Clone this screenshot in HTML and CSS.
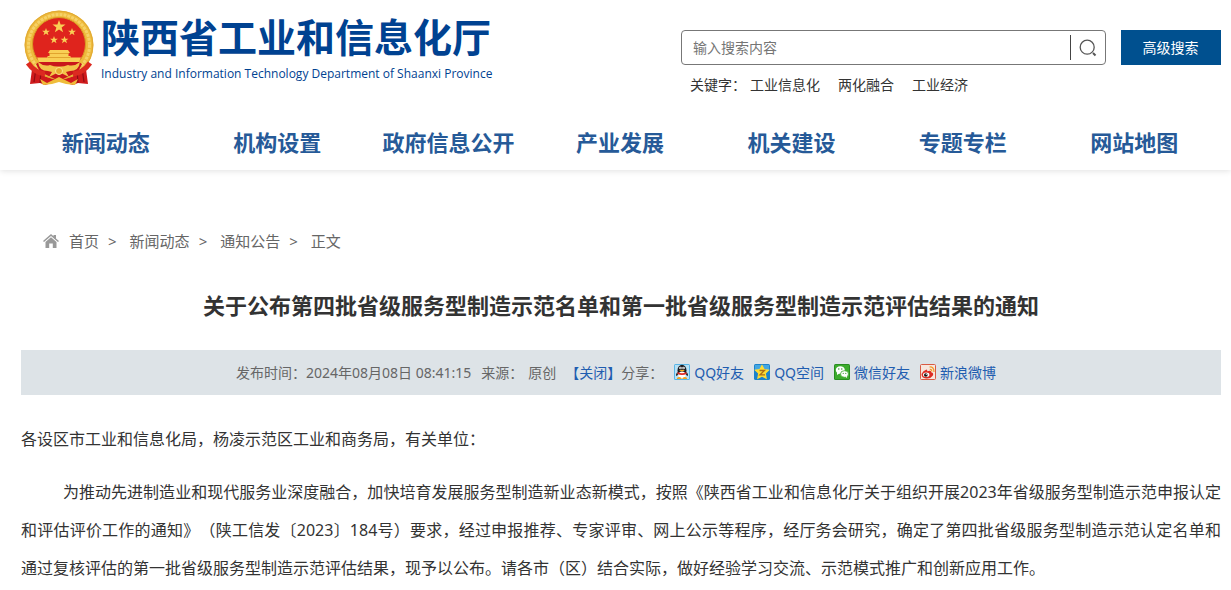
FILE: index.html
```html
<!DOCTYPE html>
<html lang="zh-CN">
<head>
<meta charset="utf-8">
<meta name="viewport" content="width=device-width, initial-scale=1">
<title>陕西省工业和信息化厅</title>
<link rel="stylesheet" href="styles.css">
</head>
<body>
<header class="header">
  <div class="top">
    <a class="logo" href="#">
      <svg class="emblem" viewBox="0 0 70 76" aria-hidden="true">
        <path d="M9 52L6 74l10-1 5 2 14-4 14 4 5-2 10 1-3-22z" fill="#cf1a1c"/>
        <path d="M12 58l-2 14M17 60l-1 13M58 58l2 14M53 60l1 13" stroke="#8f0d12" stroke-width="1.200"/>
        <circle cx="35" cy="35" r="34.500" fill="#eebb3c"/>
        <circle cx="35" cy="35" r="30.500" fill="none" stroke="#f6d268" stroke-width="3" stroke-dasharray="3 1"/>
        <circle cx="35" cy="35" r="33.800" fill="none" stroke="#e0a935" stroke-width="1"/>
        <circle cx="35" cy="34" r="26.500" fill="#df241d" stroke="#d99a25" stroke-width="1"/>
        <g fill="#f9cf55">
          <path d="M35 10l1.600 4.600h4.900l-3.900 3 1.500 4.700-4.100-2.900-4.100 2.900 1.500-4.700-3.900-3h4.900z"/>
          <path id="s" d="M22 18l1 2.700h2.900l-2.300 1.700.9 2.800-2.500-1.700-2.500 1.700.9-2.800-2.300-1.700H21z"/>
          <use href="#s" x="26"/><use href="#s" x="8" y="8"/><use href="#s" x="18.500" y="8"/>
          <path d="M26 40h18l2 3H24zM25.500 43h19v3h2v3h-23v-3h2z"/>
          <path d="M13 47.500h44l-2 4.500H15z"/>
        </g>
        <path d="M25 43.500h20M24 47.500h22" stroke="#d7901e" stroke-width=".7"/>
        <path d="M12 54l3-2h40l3 2-4 8-15 7h-8l-15-7z" fill="#c9171b"/>
        <path d="M14 52q6 5 12 3 5 2 9 1.500 4 .5 9-1.500 6 2 12-3-1 9-10 9l-4 1 3 5-10-5-10 5 3-5-4-1q-9 0-10-9z" fill="#f3c44a"/>
        <path d="M16 69l7 4 12-6 12 6 7-4-3 6-9-1-7-2-7 2-9 1z" fill="#efbd3b"/>
        <path d="M4 53q7 10 17 11M66 53q-7 10-17 11" fill="none" stroke="#dc2a20" stroke-width="5"/>
        <circle cx="35" cy="61" r="3.500" fill="#e8a92e" stroke="#fbe48a"/>
      </svg>
      <span class="logo-text">
        <span class="logo-cn">陕西省工业和信息化厅</span>
        <span class="logo-en">Industry and Information Technology Department of Shaanxi Province</span>
      </span>
    </a>
    <div class="search">
      <form class="search-row">
        <div class="search-box">
          <input class="search-input" type="text" placeholder="输入搜索内容" aria-label="输入搜索内容">
          <button class="search-btn" type="button" aria-label="搜索">
            <svg viewBox="0 0 18 18" width="18" height="18" fill="none" stroke="#555" stroke-width="1.300"><circle cx="8.200" cy="8.200" r="7"/><path d="M14 14l2.500 2.500" stroke-width="2"/></svg>
          </button>
        </div>
        <button class="advanced" type="button">高级搜索</button>
      </form>
      <div class="keywords">
        <span>关键字：</span><a href="#">工业信息化</a><a href="#">两化融合</a><a href="#">工业经济</a>
      </div>
    </div>
  </div>
  <nav class="nav">
    <a href="#">新闻动态</a><a href="#">机构设置</a><a href="#">政府信息公开</a><a href="#">产业发展</a><a href="#">机关建设</a><a href="#">专题专栏</a><a href="#">网站地图</a>
  </nav>
</header>
<main class="main">
  <nav class="crumbs" aria-label="当前位置">
    <svg class="home" viewBox="0 0 16 14" width="16" height="14" fill="#999" aria-hidden="true"><path d="M8 0l2.500 2.200V1H13v3.500L16 7l-1 1-7-6-7 6-1-1z"/><path d="M8 3.300l5.500 4.700v6H9.800V9.500H6.200V14H2.500V8z"/></svg>
    <a href="#">首页</a><span>&gt;</span><a href="#">新闻动态</a><span>&gt;</span><a href="#">通知公告</a><span>&gt;</span><a href="#">正文</a>
  </nav>
  <h1 class="title">关于公布第四批省级服务型制造示范名单和第一批省级服务型制造示范评估结果的通知</h1>
  <div class="meta">
    <span class="date">发布时间：2024年08月08日 08:41:15</span>
    <span class="source">来源：<span class="origin">原创</span></span>
    <a href="#">【关闭】</a>
    <span class="share-label">分享：</span>
    <span class="shares">
      <a class="share" href="#">
        <svg viewBox="0 0 16 16" width="16" height="16" aria-hidden="true"><rect width="16" height="16" rx="1.500" fill="#58b5e6"/><rect x="1" y="1" width="14" height="14" fill="#b8e1f5"/><path d="M3.500 8Q1.500 10 2 12l2-1zM12.500 8q2 2 1.500 4l-2-1z" fill="#222"/><ellipse cx="8" cy="6.500" rx="4.500" ry="5.800" fill="#1b1b1f"/><ellipse cx="8" cy="11" rx="3.600" ry="3.500" fill="#fff"/><path d="M3.500 8q4.500 2.500 9 0v2q-4.500 2-9 0z" fill="#e42a20"/><circle cx="6.500" cy="4" r="1.300" fill="#fff"/><circle cx="9.500" cy="4" r="1.300" fill="#fff"/><circle cx="6.800" cy="4.100" r=".5"/><circle cx="9.200" cy="4.100" r=".5"/><path d="M5 6.300q3-1.200 6 0-3 2.200-6 0z" fill="#f9b622"/><path d="M3 14q2-2 4.500 0v1H3zM8.500 14q2.500-2 4.500 0v1H8.500z" fill="#f5a31c"/></svg>QQ好友</a>
      <a class="share" href="#">
        <svg viewBox="0 0 16 16" width="16" height="16" aria-hidden="true"><rect width="16" height="16" rx="1.500" fill="#1b83cc"/><path d="M1 1h14v6H1z" fill="#44a7e2"/><path d="M8 .3l2.500 4.700 5.300.8-3.900 3.800 1 5.600L8 12.700l-4.900 2.500 1-5.600L.2 5.800 5.500 5z" fill="#fddc35"/><path d="M5.500 6.500h5L6 10.800h5" fill="none" stroke="#ad6e15" stroke-width="1.300"/></svg>QQ空间</a>
      <a class="share" href="#">
        <svg viewBox="0 0 16 16" width="16" height="16" aria-hidden="true"><rect width="16" height="16" rx="1.500" fill="#288d20"/><rect x="1" y="1" width="14" height="14" fill="#3dab2d"/><ellipse cx="6.300" cy="6" rx="4.500" ry="3.800" fill="#fff"/><path d="M3 8v3l3-2z" fill="#fff"/><ellipse cx="10.500" cy="10" rx="4" ry="3.300" fill="#fff" stroke="#3dab2d" stroke-width=".8"/><path d="M11 12.500l2 1.600V12z" fill="#fff"/><g fill="#298d20"><circle cx="4.800" cy="5" r=".7"/><circle cx="7.800" cy="5" r=".7"/><circle cx="9.200" cy="9.300" r=".6"/><circle cx="11.800" cy="9.300" r=".6"/></g></svg>微信好友</a>
      <a class="share" href="#">
        <svg viewBox="0 0 16 16" width="16" height="16" aria-hidden="true"><rect x=".5" y=".5" width="15" height="15" rx="1" fill="#f6e7df" stroke="#d95a43"/><path d="M1.500 10Q3 6.500 6.500 5.500q1 .3.700 1.800 4-1.300 4 1 3 1 1.500 3.400Q10.500 15 6 14.500T1.500 10z" fill="#dc2d24"/><ellipse cx="6.200" cy="10.800" rx="3.200" ry="2.200" fill="#fff"/><circle cx="5.800" cy="11" r="1.800" fill="#111"/><circle cx="6.300" cy="10.500" r=".6" fill="#fff"/><path d="M9.500 3q4.500-.5 4.500 5M9.800 5.300q2-.2 2 2.200" fill="none" stroke="#f39a26" stroke-width="1.200"/></svg>新浪微博</a>
    </span>
  </div>
  <article class="article">
    <p class="to">各设区市工业和信息化局，杨凌示范区工业和商务局，有关单位：</p>
    <p class="para">为推动先进制造业和现代服务业深度融合，加快培育发展服务型制造新业态新模式，按照《陕西省工业和信息化厅关于组织开展2023年省级服务型制造示范申报认定和评估评价工作的通知》（陕工信发〔2023〕184号）要求，经过申报推荐、专家评审、网上公示等程序，经厅务会研究，确定了第四批省级服务型制造示范认定名单和通过复核评估的第一批省级服务型制造示范评估结果，现予以公布。请各市（区）结合实际，做好经验学习交流、示范模式推广和创新应用工作。</p>
  </article>
</main>
</body>
</html>
```
FILE: styles.css
```css
* { box-sizing: border-box; }
body {
  margin: 0;
  background: #fff;
  color: #333;
  font-family: "Noto Sans", "Noto Sans CJK SC", sans-serif;
  font-size: 14px;
  text-spacing-trim: space-all;
}
a { color: inherit; text-decoration: none; }
button, input { font: inherit; }

.header {
  padding: 0 11px 0 20px;
  box-shadow: 0 1px 6px rgba(0, 0, 0, 0.12);
}
.top {
  display: flex;
  justify-content: space-between;
  align-items: flex-start;
  height: 118px;
}
.logo {
  display: flex;
  gap: 7px;
  padding: 10px 0 0 4px;
  color: #004291;
}
.emblem { width: 70px; height: 76px; }
.logo-text { display: flex; flex-direction: column; white-space: nowrap; }
.logo-cn { font-size: 39px; font-weight: 700; line-height: 54px; }
.logo-en { font-family: "Open Sans", sans-serif; font-size: 12px; line-height: 20px; }

.search { width: 540px; margin-right: -1px; padding-top: 30px; }
.search-row { display: flex; gap: 15px; }
.search-box {
  flex: 1;
  display: flex;
  align-items: center;
  height: 35px;
  border: 1px solid #777;
  border-radius: 4px;
}
.search-input {
  flex: 1;
  min-width: 0;
  padding: 0 11px;
  border: 0;
  outline: 0;
  background: none;
}
.search-input::placeholder { color: #757575; }
.search-btn {
  display: flex;
  align-items: center;
  justify-content: center;
  width: 35px;
  height: 25px;
  padding: 0;
  border: 0;
  border-left: 1px solid #444;
  background: none;
}
.advanced {
  width: 100px;
  height: 35px;
  padding: 0 1px 2px 0;
  border: 0;
  background: #00508f;
  color: #fff;
}
.keywords { display: flex; gap: 18px; padding: 10px 0 0 9px; line-height: 20px; }
.keywords span { margin-right: -14px; }

.nav {
  display: grid;
  grid-template-columns: repeat(7, 1fr);
  height: 52px;
  color: #265a98;
  font-size: 22px;
  font-weight: 700;
  line-height: 48px;
  text-align: center;
  white-space: nowrap;
}

.main { padding: 59px 10px 20px 21px; }
.crumbs {
  display: flex;
  align-items: center;
  padding-left: 22px;
  color: #666;
  font-size: 15px;
  line-height: 24px;
}
.home { margin-right: 10px; }
.crumbs span { margin: 0 13px 0 9px; font-size: 15px; }

.title {
  margin: 36px 0 29px;
  font-size: 22px;
  line-height: 32px;
  text-align: center;
}

.meta {
  display: flex;
  align-items: center;
  justify-content: center;
  padding: 0 10px 2px 0;
  height: 45px;
  background: #dde3e7;
  color: #666;
  white-space: nowrap;
}
.meta a { color: #1f5db0; }
.source { margin: 0 9px 0 10px; }
.origin { margin-left: 5px; }
.shares { display: flex; gap: 10px; margin-left: 11px; }
.share { display: flex; align-items: center; gap: 4px; }

.article { padding-top: 25px; font-size: 16px; line-height: 38px; }
.article p { margin: 0; }
.article .para { margin-top: 15px; text-indent: 42px; text-align: justify; }
```
